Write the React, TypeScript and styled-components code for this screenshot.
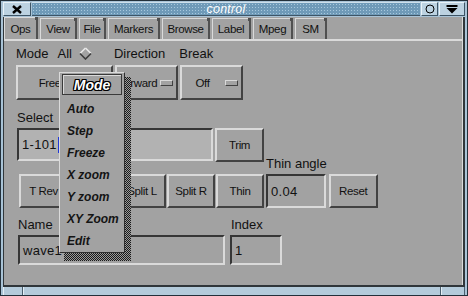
import React from "react";
import styled, { createGlobalStyle } from "styled-components";

const GlobalStyle = createGlobalStyle`
  html, body {
    margin: 0;
    padding: 0;
    background: #a2a2a2;
  }
  body {
    font-family: "Liberation Sans", Arial, sans-serif;
  }
`;

const PANEL = "#a2a2a2";
const LIGHT = "#dadada";
const DARK = "#424242";

// narrow helvetica look, the X bitmap font is tighter than Liberation
const smallFont = `
  font-family: "Liberation Sans", Arial, sans-serif;
  font-size: 11.5px;
  letter-spacing: -0.35px;
`;

const Window = styled.div`
  position: relative;
  box-sizing: border-box;
  width: 468px;
  height: 296px;
  display: flex;
  flex-direction: column;
  background: #a9c3d6;
  border: 1px solid #23303a;
  padding: 1px 2px 0 2px;
`;

const TitleBar = styled.div`
  display: flex;
  align-items: stretch;
  height: 14px;
  gap: 1px;
  margin-bottom: 1px;
`;

const FrameButton = styled.div<{ $w: number }>`
  box-sizing: border-box;
  width: ${({ $w }) => $w}px;
  display: flex;
  align-items: center;
  justify-content: center;
  background: #bcd2e1;
  border-top: 1px solid #e8f2f8;
  border-left: 1px solid #e8f2f8;
  border-right: 1px solid #3e5566;
  border-bottom: 1px solid #3e5566;
`;

const TitleStrip = styled.div`
  flex: 1;
  display: flex;
  align-items: center;
  justify-content: center;
  background-color: #6f9ab8;
  background-image: radial-gradient(circle, #a8c8dd 0.7px, transparent 0.9px);
  background-size: 3px 3px;
  border-top: 1px solid #cfe0ec;
  border-bottom: 1px solid #3e5566;
`;

const TitleText = styled.span`
  color: #ffffff;
  font-style: italic;
  font-size: 12.5px;
  line-height: 12px;
  letter-spacing: 0.2px;
`;

const Body = styled.div`
  flex: 1;
  display: flex;
  flex-direction: column;
  background: ${PANEL};
  border-left: 1px solid #30363a;
  border-right: 2px solid #30363a;
  border-bottom: 2px solid #30363a;
  box-shadow: inset -1px 0 0 ${LIGHT};
`;

const TabBar = styled.div`
  display: flex;
  align-items: flex-end;
  gap: 2px;
  height: 22px;
`;

const Tab = styled.div<{ $w: number; $active?: boolean }>`
  position: relative;
  box-sizing: border-box;
  width: ${({ $w }) => $w}px;
  height: ${({ $active }) => ($active ? 22 : 21)}px;
  display: flex;
  align-items: center;
  justify-content: center;
  ${smallFont}
  color: #111;
  background: ${PANEL};
  border-top: 1px solid ${LIGHT};
  border-left: 1px solid ${LIGHT};
  border-right: 2px solid #505050;

  &::after {
    content: "";
    position: absolute;
    right: -2px;
    top: -1px;
    width: 3px;
    height: 3px;
    background: #505050;
  }
`;

const Panel = styled.div`
  flex: 1;
  display: flex;
  flex-direction: column;
  border-top: 2px solid ${LIGHT};
  padding: 5px 0 0 12px;
`;

const LabelRow = styled.div`
  display: flex;
  align-items: center;
  height: 15px;
`;

const Label = styled.span<{ $ml?: number }>`
  font-size: 13px;
  line-height: 15px;
  color: #111;
  margin-left: ${({ $ml }) => $ml ?? 0}px;
  white-space: nowrap;
`;

const ButtonRow = styled.div<{ $mt?: number }>`
  display: flex;
  align-items: flex-start;
  gap: 2px;
  margin-top: ${({ $mt }) => $mt ?? 0}px;
`;

const Raised = styled.div<{ $w: number; $h: number }>`
  box-sizing: border-box;
  width: ${({ $w }) => $w}px;
  height: ${({ $h }) => $h}px;
  display: flex;
  align-items: center;
  justify-content: center;
  background: ${PANEL};
  border-top: 2px solid ${LIGHT};
  border-left: 2px solid ${LIGHT};
  border-right: 2px solid ${DARK};
  border-bottom: 2px solid ${DARK};
  ${smallFont}
  color: #111;
  white-space: nowrap;
`;

const ToggleText = styled.span`
  flex: 1;
  text-align: center;
`;

const Indicator = styled.span`
  box-sizing: border-box;
  width: 13px;
  height: 6px;
  margin: 0 3px 0 2px;
  background: ${PANEL};
  border-top: 1px solid ${LIGHT};
  border-left: 1px solid ${LIGHT};
  border-right: 1px solid ${DARK};
  border-bottom: 1px solid ${DARK};
`;

const Field = styled.div<{ $w: number; $h: number; $bg?: string }>`
  box-sizing: border-box;
  width: ${({ $w }) => $w}px;
  height: ${({ $h }) => $h}px;
  display: flex;
  align-items: center;
  padding-left: 3px;
  background: ${({ $bg }) => $bg ?? PANEL};
  border-top: 2px solid #363636;
  border-left: 2px solid #363636;
  border-right: 2px solid ${LIGHT};
  border-bottom: 2px solid ${LIGHT};
  font-size: 13px;
  color: #111;
  letter-spacing: 0.3px;
`;

const Caret = styled.span`
  display: inline-block;
  width: 2px;
  height: 16px;
  margin-left: 1px;
  background: #2038d8;
`;

const Column = styled.div<{ $ml?: number }>`
  display: flex;
  flex-direction: column;
  gap: 3px;
  margin-left: ${({ $ml }) => $ml ?? 0}px;
`;

const ThinRow = styled.div`
  display: flex;
  align-items: flex-end;
  gap: 1px;
  margin-top: -6px;
  padding-left: 3px;
`;

const NameRow = styled.div`
  display: flex;
  margin-top: 9px;
  padding-left: 2px;
`;

const MenuLayer = styled.div`
  position: absolute;
  left: 58px;
  top: 71px;
  width: 66px;
  height: 181px;
`;

const MenuShadow = styled.div`
  position: absolute;
  left: 5px;
  top: 5px;
  width: calc(100% + 1px);
  height: calc(100% + 3px);
  background: repeating-conic-gradient(#1a1a1a 0 25%, #9a9a9a 0 50%) 0 0 / 2px 2px;
`;

const Menu = styled.div`
  position: relative;
  width: 100%;
  height: 100%;
  box-sizing: border-box;
  background: ${PANEL};
  border-top: 1px solid ${LIGHT};
  border-left: 1px solid ${LIGHT};
  border-right: 1px solid #303030;
  border-bottom: 1px solid #303030;
  padding: 1px 2px 0 2px;
  display: flex;
  flex-direction: column;
`;

const MenuTitle = styled.div`
  box-sizing: border-box;
  height: 21px;
  display: flex;
  align-items: center;
  justify-content: center;
  border: 1px solid #3a3a3a;
  box-shadow: inset 1px 1px 0 ${LIGHT};
  font-size: 14px;
  font-weight: bold;
  font-style: italic;
  color: #ffffff;
  text-shadow: 1px 0 0 #000, -1px 0 0 #000, 0 1px 0 #000, 0 -1px 0 #000,
    1px 1px 0 #000, -1px -1px 0 #000, 1px -1px 0 #000, -1px 1px 0 #000;
  margin-bottom: 3px;
`;

const MenuItem = styled.div`
  height: 22px;
  display: flex;
  align-items: center;
  padding-left: 5px;
  font-size: 12px;
  font-weight: bold;
  font-style: italic;
  color: #141414;
  white-space: nowrap;
`;

const BottomFrame = styled.div`
  height: 8px;
  display: flex;
`;

const Grip = styled.div<{ $w?: number }>`
  width: ${({ $w }) => ($w ? `${$w}px` : "auto")};
  flex: ${({ $w }) => ($w ? "none" : 1)};
  border-left: 1px solid #e4eef5;
  border-right: 1px solid #4a5f6e;
  background: #b4cbdb;
`;

const tabs: [string, number][] = [
  ["Ops", 34],
  ["View", 37],
  ["File", 27],
  ["Markers", 52],
  ["Browse", 48],
  ["Label", 39],
  ["Mpeg", 40],
  ["SM", 32],
];
const modes = ["Auto", "Step", "Freeze", "X zoom", "Y zoom", "XY Zoom", "Edit"];

const Diamond = () => (
  <svg width="13" height="13" viewBox="0 0 13 13" style={{ marginLeft: 7 }}>
    <path d="M6.5 1 L1 6.5" stroke="#e8e8e8" strokeWidth="1.6" />
    <path d="M6.5 1 L12 6.5" stroke="#e8e8e8" strokeWidth="1.6" />
    <path d="M1 6.5 L6.5 12 L12 6.5" stroke="#3c3c3c" strokeWidth="1.6" fill="none" />
  </svg>
);

export default function App() {
  return (
    <>
      <GlobalStyle />
      <Window>
        <TitleBar>
          <FrameButton $w={28}>
            <svg width="10" height="9" viewBox="0 0 10 9">
              <path d="M1 1 L9 8 M9 1 L1 8" stroke="#000" strokeWidth="2.4" />
            </svg>
          </FrameButton>
          <TitleStrip>
            <TitleText>control</TitleText>
          </TitleStrip>
          <FrameButton $w={17}>
            <svg width="10" height="10" viewBox="0 0 10 10">
              <circle cx="5" cy="5" r="4" stroke="#000" strokeWidth="1" fill="none" />
            </svg>
          </FrameButton>
          <FrameButton $w={26}>
            <svg width="12" height="9" viewBox="0 0 12 9">
              <rect x="0.5" y="0" width="11" height="2" fill="#000" />
              <path d="M0.5 3 L11.5 3 L6 8.5 Z" fill="#000" />
            </svg>
          </FrameButton>
        </TitleBar>

        <Body>
          <TabBar>
            {tabs.map(([t, w], i) => (
              <Tab key={t} $w={w} $active={i === 0}>
                {t}
              </Tab>
            ))}
          </TabBar>

          <Panel>
            <LabelRow>
              <Label>Mode</Label>
              <Label $ml={9}>All</Label>
              <Diamond />
              <Label $ml={22}>Direction</Label>
              <Label $ml={14}>Break</Label>
            </LabelRow>

            <ButtonRow $mt={4}>
              <Raised $w={97} $h={35}>
                <ToggleText>Freeze</ToggleText>
                <Indicator />
              </Raised>
              <Raised $w={63} $h={35}>
                <ToggleText>Forward</ToggleText>
                <Indicator />
              </Raised>
              <Raised $w={63} $h={35}>
                <ToggleText>Off</ToggleText>
                <Indicator />
              </Raised>
            </ButtonRow>

            <LabelRow style={{ marginTop: 10 }}>
              <Label $ml={1}>Select</Label>
            </LabelRow>

            <ButtonRow $mt={3} style={{ paddingLeft: 1 }}>
              <Field $w={196} $h={33} $bg="#b2b2b2">
                1-101
                <Caret />
              </Field>
              <Raised $w={49} $h={34}>
                Trim
              </Raised>
            </ButtonRow>

            <ThinRow>
              <Raised $w={49} $h={34}>T Rev</Raised>
              {/* this one sits fully under the popup menu */}
              <Raised $w={48} $h={34} />
              <Raised $w={48} $h={34}>Split L</Raised>
              <Raised $w={48} $h={34}>Split R</Raised>
              <Raised $w={48} $h={34}>Thin</Raised>
              <Column $ml={1}>
                <Label>Thin angle</Label>
                <Field $w={60} $h={34}>0.04</Field>
              </Column>
              <Raised $w={49} $h={34} style={{ marginLeft: 1 }}>Reset</Raised>
            </ThinRow>

            <NameRow>
              <Column>
                <Label>Name</Label>
                <Field $w={207} $h={30}>wave1</Field>
              </Column>
              <Column $ml={5}>
                <Label $ml={1}>Index</Label>
                <Field $w={52} $h={30}>1</Field>
              </Column>
            </NameRow>
          </Panel>
        </Body>

        <BottomFrame>
          <Grip $w={18} />
          <Grip />
          <Grip $w={22} />
        </BottomFrame>

        <MenuLayer>
          <MenuShadow />
          <Menu>
            <MenuTitle>Mode</MenuTitle>
            {modes.map((m) => (
              <MenuItem key={m}>{m}</MenuItem>
            ))}
          </Menu>
        </MenuLayer>
      </Window>
    </>
  );
}
